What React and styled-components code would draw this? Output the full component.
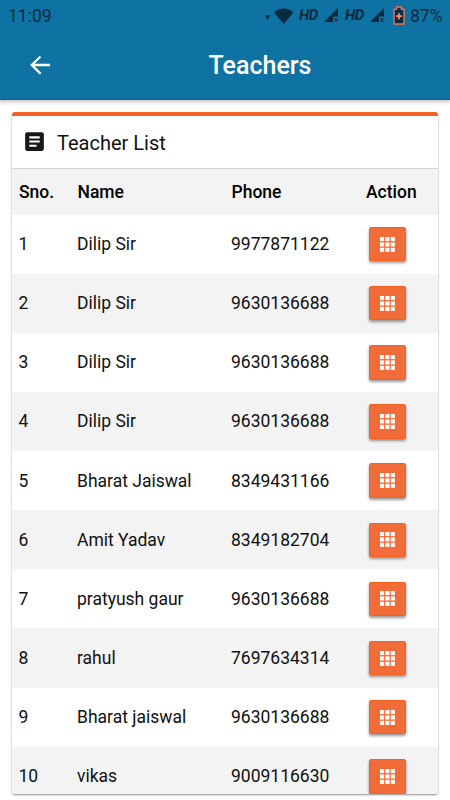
import React from "react";
import styled, { createGlobalStyle } from "styled-components";

const GlobalStyle = createGlobalStyle`
  * {
    box-sizing: border-box;
  }
  body {
    margin: 0;
    background-color: white;
    font-family: Roboto, "Liberation Sans", sans-serif;
    overflow: hidden;
  }
`;

const Container = styled.div`
  height: 800px;
  width: 100%;
  display: flex;
  flex-direction: column;
`;

const Header = styled.header`
  height: 100px;
  flex-shrink: 0;
  background-color: #0e72a3;
  border-bottom: 1px solid #04609a;
  box-shadow: 0 1px 4px 1px rgba(70, 55, 45, 0.3);
`;

const StatusBar = styled.div`
  height: 31px;
  padding: 0 8px;
  display: flex;
  align-items: center;
  justify-content: space-between;
  color: #062c3f;
`;

const Time = styled.span`
  padding-top: 1px;
  font-size: 17.5px;
  line-height: 31px;
`;

const StatusIcons = styled.div`
  display: flex;
  align-items: center;

  svg {
    display: block;
    flex-shrink: 0;
  }
`;

const Network = styled.span`
  width: 19px;
  margin-left: ${(props) => props.$left}px;
  margin-right: ${(props) => props.$right}px;
  font-size: 15px;
  font-weight: bold;
  font-style: italic;
  letter-spacing: -0.6px;
  line-height: 31px;
`;

const BatteryGap = styled.span`
  margin-left: 8px;
`;

const Percent = styled.span`
  width: 32px;
  margin-left: 5px;
  padding-top: 1px;
  font-size: 17.5px;
  line-height: 31px;
`;

const Toolbar = styled.div`
  height: 68px;
  padding-left: 26px;
  display: flex;
  align-items: center;
  color: white;
`;

const BackButton = styled.button`
  width: 28px;
  height: 28px;
  padding: 0;
  border: none;
  background: none;
  color: white;
  cursor: pointer;
`;

const Title = styled.h1`
  flex: 1;
  margin: 2px 0 0 16px;
  text-align: center;
  font-size: 25px;
  font-weight: 500;
  line-height: 32px;
`;

const Card = styled.section`
  height: 682px;
  margin: 12px 12px 0 12px;
  overflow: hidden;
  border-top: 4px solid #f4602b;
  border-radius: 3px;
  background-color: white;
  box-shadow: 0 1px 2px rgba(0, 0, 0, 0.45);
`;

const CardHeader = styled.div`
  height: 53px;
  padding: 0 0 2px 10px;
  display: flex;
  align-items: center;
  border-bottom: 1px solid #d2d2d2;
`;

const CardTitle = styled.h2`
  margin: 4px 0 0 10px;
  font-size: 20px;
  font-weight: 400;
  line-height: 24px;
  color: #111;
`;

const Row = styled.div`
  height: 59.15px;
  display: grid;
  grid-template-columns: 58.5px 154px 137.5px 1fr;
  align-items: center;
  padding-left: 6.5px;
  font-size: 17.5px;
  color: #111;
  background-color: ${(props) => (props.$striped ? "#f3f3f3" : "white")};
`;

const HeadRow = styled(Row)`
  height: 45.5px;
  padding-left: 7px;
  grid-template-columns: 58.5px 154px 134.5px 1fr;
  font-weight: 500;
  color: black;
`;

const ActionButton = styled.button`
  width: 37px;
  height: 34.5px;
  padding: 0;
  display: flex;
  align-items: center;
  justify-content: center;
  border: 1px solid #f4621f;
  border-radius: 2px;
  background-color: #f26c3a;
  box-shadow: 0 2px 3px rgba(0, 0, 0, 0.4);
  cursor: pointer;
`;

const ArrowIcon = () => (
  <svg width="28" height="28" viewBox="0 0 24 24" fill="currentColor">
    <path d="M20.6 11H7.4l5.6-5.6L11.8 4 3.5 12l8.3 8.2 1.4-1.4L7.4 13h13.2v-2z" />
  </svg>
);

const SignalIcon = () => (
  <svg width="15" height="15" viewBox="0 0 15 15" fill="currentColor">
    <path d="M0 14 14 0v8.6H9V14z" />
    <path
      d="m10 10 4 4m0-4-4 4"
      fill="none"
      stroke="currentColor"
      strokeWidth="1"
    />
  </svg>
);

const WifiIcon = () => (
  <svg width="29" height="16" viewBox="0 0 29 16" fill="currentColor">
    <path d="M0 7.2h5.2L2.6 12z" />
    <path d="M18.7 16 9 4.4C14.5-.7 23-.7 28.4 4.4z" />
  </svg>
);

const BatteryIcon = () => (
  <svg width="12" height="19" viewBox="0 0 12 19">
    <path
      d="M1 3.2h2.6V1h4.8v2.2H11V18H1z"
      fill="#063048"
      stroke="#f46d50"
      strokeWidth="1.4"
    />
    <path d="M6 7.2v6M3 10.2h6" stroke="#ff8b6d" strokeWidth="1.8" />
  </svg>
);

const ArticleIcon = () => (
  <svg width="25" height="25" viewBox="0 0 24 24" fill="#191919">
    <path d="M19 3H5c-1.1 0-2 .9-2 2v14c0 1.1.9 2 2 2h14c1.1 0 2-.9 2-2V5c0-1.1-.9-2-2-2zm-5 14H7v-2h7v2zm3-4H7v-2h10v2zm0-4H7V7h10v2z" />
  </svg>
);

const GridIcon = () => (
  <svg width="15" height="15" viewBox="0 0 15 15" fill="white">
    {[0, 5.4, 10.8].map((y) =>
      [0, 5.4, 10.8].map((x) => (
        <rect key={`${x}-${y}`} x={x} y={y} width="4.1" height="4.1" />
      ))
    )}
  </svg>
);

const teachers = [
  { name: "Dilip Sir", phone: "9977871122" },
  { name: "Dilip Sir", phone: "9630136688" },
  { name: "Dilip Sir", phone: "9630136688" },
  { name: "Dilip Sir", phone: "9630136688" },
  { name: "Bharat Jaiswal", phone: "8349431166" },
  { name: "Amit Yadav", phone: "8349182704" },
  { name: "pratyush gaur", phone: "9630136688" },
  { name: "rahul", phone: "7697634314" },
  { name: "Bharat jaiswal", phone: "9630136688" },
  { name: "vikas", phone: "9009116630" },
];

const App = () => {
  return (
    <Container>
      <GlobalStyle />
      <Header>
        <StatusBar>
          <Time>11:09</Time>
          <StatusIcons>
            <WifiIcon />
            <Network $left={5} $right={6}>
              HD
            </Network>
            <SignalIcon />
            <Network $left={6} $right={6}>
              HD
            </Network>
            <SignalIcon />
            <BatteryGap>
              <BatteryIcon />
            </BatteryGap>
            <Percent>87%</Percent>
          </StatusIcons>
        </StatusBar>
        <Toolbar>
          <BackButton>
            <ArrowIcon />
          </BackButton>
          <Title>Teachers</Title>
        </Toolbar>
      </Header>
      <Card>
        <CardHeader>
          <ArticleIcon />
          <CardTitle>Teacher List</CardTitle>
        </CardHeader>
        <HeadRow $striped>
          <span>Sno.</span>
          <span>Name</span>
          <span>Phone</span>
          <span>Action</span>
        </HeadRow>
        {teachers.map((teacher, index) => (
          <Row key={index} $striped={index % 2 === 1}>
            <span>{index + 1}</span>
            <span>{teacher.name}</span>
            <span>{teacher.phone}</span>
            <ActionButton>
              <GridIcon />
            </ActionButton>
          </Row>
        ))}
      </Card>
    </Container>
  );
};

export default App;
